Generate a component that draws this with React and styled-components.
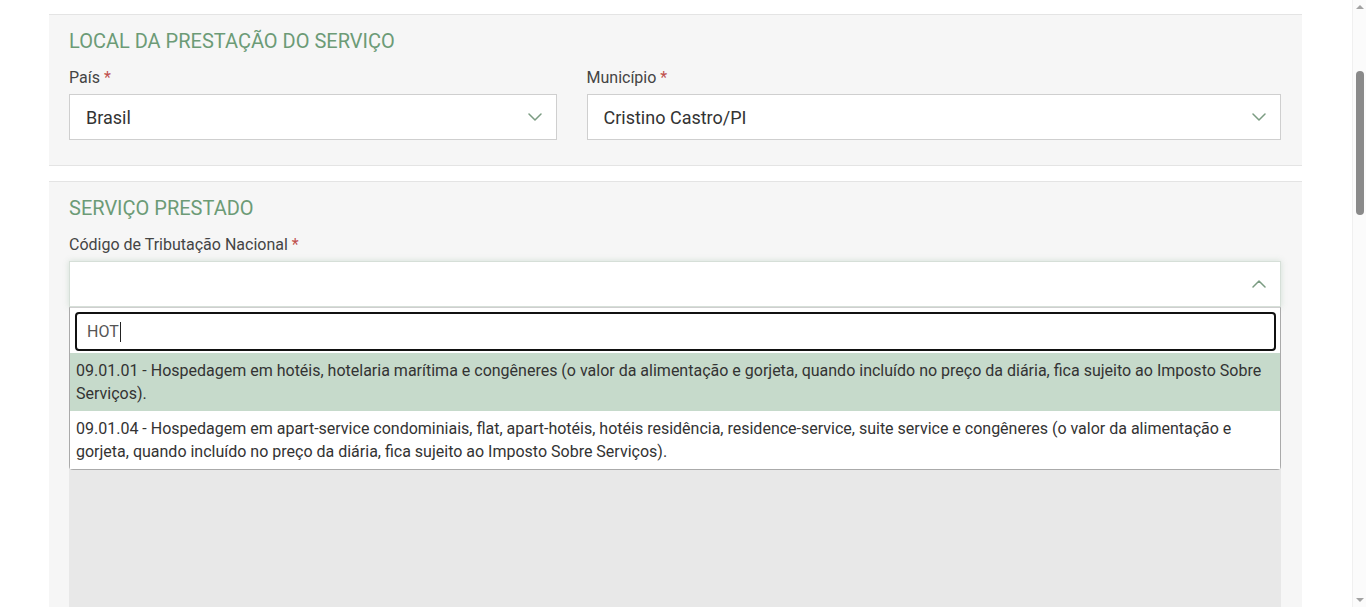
import React from "react";
import styled, { createGlobalStyle } from "styled-components";

const Global = createGlobalStyle`
  html, body { margin: 0; padding: 0; background: #fff; }
  body { font-family: Roboto, "Noto Sans", Arial, sans-serif; color: #333; }
  * { box-sizing: border-box; }
`;

const Page = styled.div`
  padding: 14px 64px 40px 49px;
  display: flex;
  flex-direction: column;
  gap: 15px;
`;

const Section = styled.section`
  background: #f6f6f6;
  border-top: 1px solid #e4e4e4;
  border-bottom: 1px solid #e4e4e4;
  padding: 14px 21px 25px 20px;
`;

const Title = styled.h2`
  margin: 0 0 15px;
  font-size: 20px;
  line-height: 24px;
  font-weight: 400;
  color: #6c9b76;
  text-transform: uppercase;
`;

const Row = styled.div`
  display: grid;
  grid-template-columns: calc((100% + 30px) * 5 / 12 - 30px) 1fr;
  column-gap: 30px;
`;

const Field = styled.div`
  display: flex;
  flex-direction: column;
  position: relative;
`;

const Label = styled.label`
  font-size: 16px;
  line-height: 20px;
  color: #444;
  margin-bottom: 6px;
  span { color: #c0504d; }
`;

const SelectBox = styled.div`
  height: 46px;
  background: #fff;
  border: 1px solid ${(p) => (p.$open ? "#d6dfd8" : "#cfcfcf")};
  box-shadow: ${(p) => (p.$open ? "0 0 6px rgba(108,155,118,0.25)" : "none")};
  display: flex;
  align-items: center;
  justify-content: space-between;
  padding: 0 14px 0 16px;
  font-size: 18px;
  color: #333;
`;

const Chevron = ({ up }) => (
  <svg width="14" height="8" viewBox="0 0 14 8" fill="none">
    <path
      d={up ? "M1 7 L7 1 L13 7" : "M1 1 L7 7 L13 1"}
      stroke="#7b9c82"
      strokeWidth="1.5"
      strokeLinecap="round"
      strokeLinejoin="round"
    />
  </svg>
);

const Dropdown = styled.div`
  position: absolute;
  top: 72px;
  left: 0;
  right: 0;
  background: #fff;
  border: 1px solid #aaa;
  border-top: 1px solid #cfcfcf;
  border-radius: 0 0 4px 4px;
  z-index: 5;
`;

const SearchWrap = styled.div`
  padding: 4px 4px 2px 5px;
`;

const Search = styled.div`
  height: 39px;
  border: 2px solid #111;
  border-radius: 4px;
  display: flex;
  align-items: center;
  padding-left: 10px;
  font-size: 16px;
  color: #555;
`;

const Caret = styled.span`
  display: inline-block;
  width: 1px;
  height: 20px;
  background: #222;
  margin-left: 1px;
`;

const Option = styled.div`
  padding: 6px;
  font-size: 16px;
  line-height: 23px;
  color: #333;
  background: ${(p) => (p.$active ? "#c6dacb" : "#fff")};
`;

const GreyField = styled.div`
  margin-top: 24px;
  height: 1400px;
  background: #e8e8e8;
`;

/* overlay that paints the browser's classic scrollbar seen in the capture */
const ScrollTrack = styled.div`
  position: fixed;
  top: 0;
  right: 0;
  width: 14px;
  height: 100vh;
  background: #fbfbfb;
  border-left: 1px solid #f0f0f0;
  z-index: 20;
`;

const ScrollThumb = styled.div`
  position: absolute;
  left: 3px;
  width: 8px;
  top: 71px;
  height: 144px;
  border-radius: 4px;
  background: #8a8a8a;
`;

const ScrollArrow = styled.div`
  position: absolute;
  left: 3px;
  width: 0;
  height: 0;
  border-left: 4px solid transparent;
  border-right: 4px solid transparent;
  ${(p) =>
    p.$up
      ? "top: 5px; border-bottom: 4px solid #a3a3a3;"
      : "bottom: 5px; border-top: 4px solid #a3a3a3;"}
`;

export default function App() {
  return (
    <>
      <Global />
      <ScrollTrack>
        <ScrollArrow $up />
        <ScrollThumb />
        <ScrollArrow />
      </ScrollTrack>
      <Page>
        <Section>
          <Title>Local da Prestação do Serviço</Title>
          <Row>
            <Field>
              <Label>País <span>*</span></Label>
              <SelectBox>
                Brasil
                <Chevron />
              </SelectBox>
            </Field>
            <Field>
              <Label>Município <span>*</span></Label>
              <SelectBox>
                Cristino Castro/PI
                <Chevron />
              </SelectBox>
            </Field>
          </Row>
        </Section>
        <Section>
          <Title>Serviço Prestado</Title>
          <Field>
            <Label>Código de Tributação Nacional <span>*</span></Label>
            <SelectBox $open>
              <span />
              <Chevron up />
            </SelectBox>
            <Dropdown>
              <SearchWrap>
                <Search>
                  HOT<Caret />
                </Search>
              </SearchWrap>
              <Option $active>
                09.01.01 - Hospedagem em hotéis, hotelaria marítima e congêneres (o valor da alimentação e gorjeta, quando incluído no preço da diária, fica sujeito ao Imposto Sobre Serviços).
              </Option>
              <Option>
                09.01.04 - Hospedagem em apart-service condominiais, flat, apart-hotéis, hotéis residência, residence-service, suite service e congêneres (o valor da alimentação e gorjeta, quando incluído no preço da diária, fica sujeito ao Imposto Sobre Serviços).
              </Option>
            </Dropdown>
            <GreyField />
          </Field>
        </Section>
      </Page>
    </>
  );
}
